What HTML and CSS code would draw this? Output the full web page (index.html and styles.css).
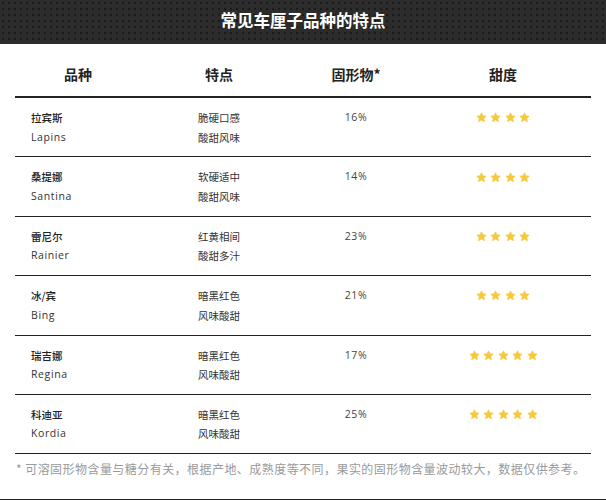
FILE: index.html
```html
<!DOCTYPE html>
<html lang="zh">
<head>
<meta charset="utf-8">
<link rel="stylesheet" href="styles.css">
</head>
<body>
<svg width="0" height="0" class="defs">
  <defs>
    <symbol id="star" viewBox="0 0 24 24">
      <path d="M12 1.8l3.1 6.6 7.1.8-5.3 4.9 1.5 7.1L12 17.6l-6.4 3.6 1.5-7.1L1.8 9.2l7.1-.8z" fill="currentColor" stroke="currentColor" stroke-width="1.6" stroke-linejoin="round"/>
    </symbol>
  </defs>
</svg>
<div class="page">
  <header class="banner"><h1 class="title">常见车厘子品种的特点</h1></header>
  <div class="table">
    <div class="row head">
      <div class="c c1">品种</div>
      <div class="c c2">特点</div>
      <div class="c c3">固形物*</div>
      <div class="c c4">甜度</div>
    </div>
    <div class="row">
      <div class="c c1"><div class="zh">拉宾斯</div><div class="en">Lapins</div></div>
      <div class="c c2"><div>脆硬口感</div><div>酸甜风味</div></div>
      <div class="c c3 num">16%</div>
      <div class="c c4"><span class="stars"><svg><use href="#star"/></svg><svg><use href="#star"/></svg><svg><use href="#star"/></svg><svg><use href="#star"/></svg></span></div>
    </div>
    <div class="row">
      <div class="c c1"><div class="zh">桑提娜</div><div class="en">Santina</div></div>
      <div class="c c2"><div>软硬适中</div><div>酸甜风味</div></div>
      <div class="c c3 num">14%</div>
      <div class="c c4"><span class="stars"><svg><use href="#star"/></svg><svg><use href="#star"/></svg><svg><use href="#star"/></svg><svg><use href="#star"/></svg></span></div>
    </div>
    <div class="row">
      <div class="c c1"><div class="zh">雷尼尔</div><div class="en">Rainier</div></div>
      <div class="c c2"><div>红黄相间</div><div>酸甜多汁</div></div>
      <div class="c c3 num">23%</div>
      <div class="c c4"><span class="stars"><svg><use href="#star"/></svg><svg><use href="#star"/></svg><svg><use href="#star"/></svg><svg><use href="#star"/></svg></span></div>
    </div>
    <div class="row">
      <div class="c c1"><div class="zh">冰/宾</div><div class="en">Bing</div></div>
      <div class="c c2"><div>暗黑红色</div><div>风味酸甜</div></div>
      <div class="c c3 num">21%</div>
      <div class="c c4"><span class="stars"><svg><use href="#star"/></svg><svg><use href="#star"/></svg><svg><use href="#star"/></svg><svg><use href="#star"/></svg></span></div>
    </div>
    <div class="row">
      <div class="c c1"><div class="zh">瑞吉娜</div><div class="en">Regina</div></div>
      <div class="c c2"><div>暗黑红色</div><div>风味酸甜</div></div>
      <div class="c c3 num">17%</div>
      <div class="c c4"><span class="stars"><svg><use href="#star"/></svg><svg><use href="#star"/></svg><svg><use href="#star"/></svg><svg><use href="#star"/></svg><svg><use href="#star"/></svg></span></div>
    </div>
    <div class="row">
      <div class="c c1"><div class="zh">科迪亚</div><div class="en">Kordia</div></div>
      <div class="c c2"><div>暗黑红色</div><div>风味酸甜</div></div>
      <div class="c c3 num">25%</div>
      <div class="c c4"><span class="stars"><svg><use href="#star"/></svg><svg><use href="#star"/></svg><svg><use href="#star"/></svg><svg><use href="#star"/></svg><svg><use href="#star"/></svg></span></div>
    </div>
  </div>
  <p class="note">* 可溶固形物含量与糖分有关，根据产地、成熟度等不同，果实的固形物含量波动较大，数据仅供参考。</p>
</div>
</body>
</html>
```
FILE: styles.css
```css
html, body { margin: 0; padding: 0; background: #fff; }
body {
  font-family: "Open Sans", "Noto Sans CJK SC", sans-serif;
  color: #333;
}
.defs { position: absolute; width: 0; height: 0; }
.page {
  width: 606px;
  height: 500px;
  border-bottom: 1px solid #222;
  box-sizing: border-box;
}
.banner {
  height: 44px;
  background-color: #2c2c2c;
  background-image: radial-gradient(circle, #1b1b1b 1.3px, transparent 1.6px);
  background-size: 6px 6px;
  display: flex;
  align-items: center;
  justify-content: center;
}
.title {
  margin: 0;
  font-family: "Noto Sans CJK SC", sans-serif;
  font-size: 16.5px;
  font-weight: 700;
  color: #fff;
  line-height: 1;
  position: relative;
  top: -2px;
}
.table {
  margin: 0 15px;
}
.row {
  display: grid;
  grid-template-columns: 126px 156px 118px 176px;
  height: 58.4px;
  border-bottom: 1px solid #222;
  font-size: 10.5px;
  line-height: 19.5px;
}
.row.head {
  height: 52px;
  border-bottom: 2px solid #222;
  align-items: center;
}
.row.head .c {
  text-align: center;
  padding: 10px 0 0 0;
  font-family: "Noto Sans CJK SC", sans-serif;
  font-weight: 700;
  font-size: 14px;
  color: #222;
}
.c { padding-top: 10px; }
.c1 { padding-left: 16px; }
.c2 { text-align: center; font-family: "Noto Sans CJK SC", sans-serif; color: #333; }
.c3 { text-align: center; }
.c4 { text-align: center; }
.zh { font-family: "Noto Sans CJK SC", sans-serif; font-weight: 500; color: #222; }
.en { letter-spacing: 0.6px; color: #333; }
.num { letter-spacing: 0.6px; color: #444; }
.stars {
  display: inline-flex;
  gap: 3.5px;
  height: 19.5px;
  align-items: center;
  color: #f6c93c;
}
.stars svg { width: 11px; height: 11px; }
.note {
  margin: 6px 0 0 16px;
  font-family: "Noto Sans CJK SC", sans-serif;
  font-size: 12px;
  letter-spacing: 0.45px;
  color: #9a9a9a;
  line-height: 18px;
  white-space: nowrap;
}
```
